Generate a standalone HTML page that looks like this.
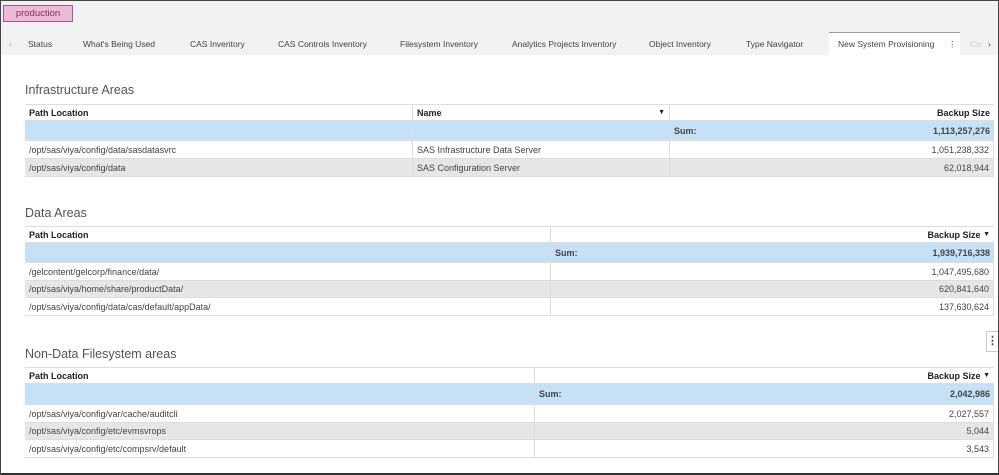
<!DOCTYPE html>
<html><head><meta charset="utf-8"><style>
*{box-sizing:border-box;margin:0;padding:0}
body{width:999px;height:475px;position:relative;background:#fff;font-family:"Liberation Sans",sans-serif;color:#444;overflow:hidden}
.frame{position:absolute;left:0;top:0;width:999px;height:475px;border:1px solid #444;border-bottom:2px solid #333;pointer-events:none;z-index:10}
.top{position:absolute;left:0;top:0;width:999px;height:55px;background:#f1f2f4}
.badge{position:absolute;left:3px;top:5px;width:70px;height:17px;background:#e9bcd6;border:1px solid #b8508a;color:#8a2a60;font-size:9.5px;line-height:15px;text-align:center}
.tab{position:absolute;top:33px;height:22px;font-size:8.5px;line-height:22px;color:#444;white-space:nowrap}
.act{position:absolute;left:829px;top:32px;width:131px;height:23px;background:#fff;border-top:1px solid #999}
.title{position:absolute;left:25px;font-size:12.5px;color:#555}
.t{position:absolute;left:25px;width:969px;font-size:9px}
.r{position:relative;width:100%;border-bottom:1px solid #ddd}
.r div{position:absolute;top:0;height:100%;padding:0 4px;display:flex;align-items:center;border-right:1px solid #ddd}
.h{background:#fff;font-weight:bold;color:#222;border-top:1px solid #ddd}
.s{background:#c6e1f6;font-weight:bold;color:#444}
.g{background:#e6e6e6}
.num{justify-content:flex-end}
</style></head><body>
<div class="top"></div>
<div class="badge">production</div>
<div class="act"></div>
<div class="tab" style="left:9px;color:#aaa">&lsaquo;</div>
<div class="tab" style="left:28px">Status</div>
<div class="tab" style="left:83px">What's Being Used</div>
<div class="tab" style="left:190px">CAS Inventory</div>
<div class="tab" style="left:278px">CAS Controls Inventory</div>
<div class="tab" style="left:400px">Filesystem Inventory</div>
<div class="tab" style="left:512px">Analytics Projects Inventory</div>
<div class="tab" style="left:649px">Object Inventory</div>
<div class="tab" style="left:746px">Type Navigator</div>
<div class="tab" style="left:838px">New System Provisioning</div>
<div class="tab" style="left:948px">&#8942;</div>
<div class="tab" style="left:970px;color:#ccc">Co</div>
<div class="tab" style="left:988px">&rsaquo;</div>

<div class="title" style="top:83px">Infrastructure Areas</div>
<div class="t" style="top:104px">
 <div class="r h" style="height:17px"><div style="left:0;width:388px">Path Location</div><div style="left:388px;width:257px;justify-content:space-between">Name<span style="font-size:7px">&#9660;</span></div><div class="num" style="left:645px;width:324px;border-right:0">Backup Size</div></div>
 <div class="r s" style="height:20px"><div style="left:0;width:388px"></div><div style="left:388px;width:257px"></div><div style="left:645px;width:324px;justify-content:space-between;border-right:0">Sum:<span>1,113,257,276</span></div></div>
 <div class="r" style="height:18px"><div style="left:0;width:388px">/opt/sas/viya/config/data/sasdatasvrc</div><div style="left:388px;width:257px">SAS Infrastructure Data Server</div><div class="num" style="left:645px;width:324px">1,051,238,332</div></div>
 <div class="r g" style="height:18px"><div style="left:0;width:388px">/opt/sas/viya/config/data</div><div style="left:388px;width:257px">SAS Configuration Server</div><div class="num" style="left:645px;width:324px">62,018,944</div></div>
</div>

<div class="title" style="top:206px">Data Areas</div>
<div class="t" style="top:226px">
 <div class="r h" style="height:17px"><div style="left:0;width:526px">Path Location</div><div class="num" style="left:526px;width:443px;border-right:0">Backup Size&nbsp;<span style="font-size:7px">&#9660;</span></div></div>
 <div class="r s" style="height:20px"><div style="left:0;width:526px"></div><div style="left:526px;width:443px;justify-content:space-between;border-right:0">Sum:<span>1,939,716,338</span></div></div>
 <div class="r" style="height:18px"><div style="left:0;width:526px">/gelcontent/gelcorp/finance/data/</div><div class="num" style="left:526px;width:443px">1,047,495,680</div></div>
 <div class="r g" style="height:17px"><div style="left:0;width:526px">/opt/sas/viya/home/share/productData/</div><div class="num" style="left:526px;width:443px">620,841,640</div></div>
 <div class="r" style="height:18px"><div style="left:0;width:526px">/opt/sas/viya/config/data/cas/default/appData/</div><div class="num" style="left:526px;width:443px">137,630,624</div></div>
</div>

<div style="position:absolute;left:986px;top:331px;width:13px;height:21px;border:1px solid #ccc;background:#fff;font-size:11px;font-weight:bold;line-height:19px;text-align:center">&#8942;</div>

<div class="title" style="top:347px">Non-Data Filesystem areas</div>
<div class="t" style="top:367px">
 <div class="r h" style="height:17px"><div style="left:0;width:510px">Path Location</div><div class="num" style="left:510px;width:459px;border-right:0">Backup Size&nbsp;<span style="font-size:7px">&#9660;</span></div></div>
 <div class="r s" style="height:21px"><div style="left:0;width:510px"></div><div style="left:510px;width:459px;justify-content:space-between;border-right:0">Sum:<span>2,042,986</span></div></div>
 <div class="r" style="height:18px"><div style="left:0;width:510px">/opt/sas/viya/config/var/cache/auditcli</div><div class="num" style="left:510px;width:459px">2,027,557</div></div>
 <div class="r g" style="height:17px"><div style="left:0;width:510px">/opt/sas/viya/config/etc/evmsvrops</div><div class="num" style="left:510px;width:459px">5,044</div></div>
 <div class="r" style="height:18px"><div style="left:0;width:510px">/opt/sas/viya/config/etc/compsrv/default</div><div class="num" style="left:510px;width:459px">3,543</div></div>
</div>
<div class="frame"></div>
</body></html>
